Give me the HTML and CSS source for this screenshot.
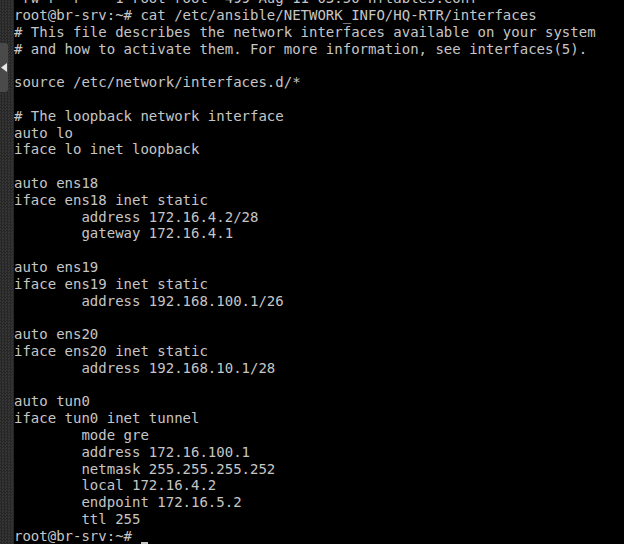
FILE: index.html
```html
<!DOCTYPE html>
<html lang="en">
<head>
<meta charset="utf-8">
<title>Terminal</title>
<link rel="stylesheet" href="styles.css">
</head>
<body>
<div class="screen">
  <div class="rail">
    <div class="tab">
      <svg class="arrow" width="6" height="9" viewBox="0 0 6 9"><path d="M0 4.5 L6 0 L6 9 Z" fill="#e6e6e6"/></svg>
    </div>
  </div>
  <div class="term">
<pre class="out">-rw-r--r--  1 root root  499 Aug 11 03:50 nftables.conf
root@br-srv:~# cat /etc/ansible/NETWORK_INFO/HQ-RTR/interfaces
# This file describes the network interfaces available on your system
# and how to activate them. For more information, see interfaces(5).

source /etc/network/interfaces.d/*

# The loopback network interface
auto lo
iface lo inet loopback

auto ens18
iface ens18 inet static
        address 172.16.4.2/28
        gateway 172.16.4.1

auto ens19
iface ens19 inet static
        address 192.168.100.1/26

auto ens20
iface ens20 inet static
        address 192.168.10.1/28

auto tun0
iface tun0 inet tunnel
        mode gre
        address 172.16.100.1
        netmask 255.255.255.252
        local 172.16.4.2
        endpoint 172.16.5.2
        ttl 255
root@br-srv:~# <span class="cursor"></span></pre>
  </div>
</div>
</body>
</html>
```
FILE: styles.css
```css
html, body {
  margin: 0;
  padding: 0;
  background: #000;
}
.screen {
  width: 624px;
  height: 544px;
  display: flex;
  overflow: hidden;
  background: #000;
}
.rail {
  width: 14px;
  flex: 0 0 14px;
  height: 544px;
  background-color: #2e2e2e;
  background-image: repeating-conic-gradient(#262626 0 25%, #363636 0 50%);
  background-size: 3px 3px;
  display: flex;
  flex-direction: column;
}
.tab {
  margin-top: 43px;
  width: 8px;
  height: 49px;
  background: #4a4a4a;
  border-radius: 0 3px 3px 0;
  display: flex;
  align-items: center;
  justify-content: flex-start;
  padding-left: 1px;
  box-sizing: border-box;
}
.arrow {
  display: block;
}
.term {
  flex: 1;
  overflow: hidden;
}
.out {
  margin: -9.7px 0 0 0;
  padding: 0;
  font-family: "DejaVu Sans Mono", "Liberation Mono", monospace;
  font-size: 14px;
  line-height: 16.8px;
  color: #c6c6c6;
  white-space: pre;
}
.cursor {
  display: inline-block;
  width: 7px;
  height: 2px;
  margin-left: 1px;
  background: #c6c6c6;
  vertical-align: -3px;
}
```
